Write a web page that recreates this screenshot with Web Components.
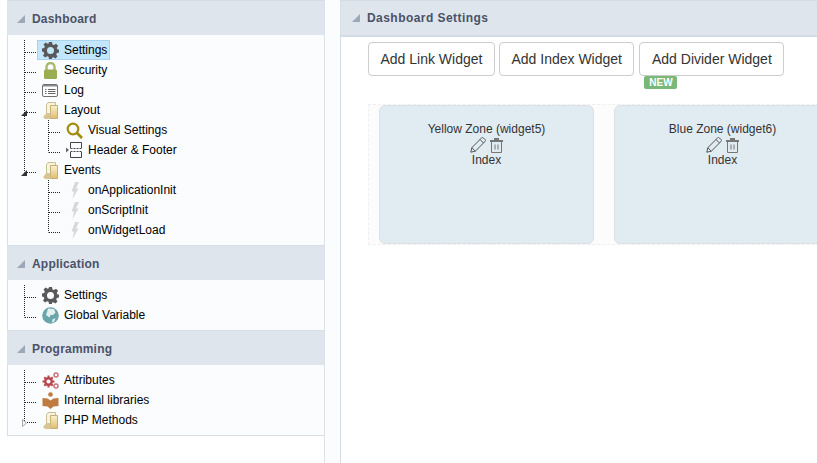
<!DOCTYPE html>
<html>
<head>
<meta charset="utf-8">
<title>Dashboard Settings</title>
<style>
html, body { margin: 0; height: 100%; }
body { font-family: "Liberation Sans", Arial, sans-serif; font-size: 12px; color: #000; background: #fff; overflow: hidden; }
</style>
</head>
<body>
<app-shell>
  <side-panel slot="side">
    <panel-section title="Dashboard">
      <tree-node icon="gear" selected>Settings</tree-node>
      <tree-node icon="lock">Security</tree-node>
      <tree-node icon="log">Log</tree-node>
      <tree-node icon="folder" toggle="open">Layout</tree-node>
      <tree-node icon="search" level="1">Visual Settings</tree-node>
      <tree-node icon="layout" level="1" last>Header &amp; Footer</tree-node>
      <tree-node icon="folder" toggle="open" last>Events</tree-node>
      <tree-node icon="bolt" level="1" parent-last>onApplicationInit</tree-node>
      <tree-node icon="bolt" level="1" parent-last>onScriptInit</tree-node>
      <tree-node icon="bolt" level="1" parent-last last>onWidgetLoad</tree-node>
    </panel-section>
    <panel-section title="Application">
      <tree-node icon="gear">Settings</tree-node>
      <tree-node icon="globe" last>Global Variable</tree-node>
    </panel-section>
    <panel-section title="Programming">
      <tree-node icon="gears">Attributes</tree-node>
      <tree-node icon="book">Internal libraries</tree-node>
      <tree-node icon="folder" toggle="closed" last>PHP Methods</tree-node>
    </panel-section>
  </side-panel>
  <main-panel slot="main" title="Dashboard Settings">
    <tool-button>Add Link Widget</tool-button>
    <tool-button>Add Index Widget</tool-button>
    <tool-button badge="NEW">Add Divider Widget</tool-button>
    <zone-card slot="zones" name="Yellow Zone (widget5)"></zone-card>
    <zone-card slot="zones" name="Blue Zone (widget6)"></zone-card>
  </main-panel>
</app-shell>

<script>
const ICONS = {
  gear: `<svg width="17" height="17" viewBox="0 0 17 17"><path fill="#595959" fill-rule="evenodd" d="M7 0h3l.5 2.400 1.500.6 2-1.300 2.100 2.100L14.800 5.900l.6 1.500 1.600.1v3l-2.200.4-.6 1.500 1.300 2-2.100 2.100-2-1.300-1.500.6L9.900 17H7l-.4-2.200-1.500-.6-2 1.300L1 13.400l1.300-2-.6-1.500L0 9.500v-3l2.200-.4.6-1.500-1.300-2L3.600.5l2 1.300 1-.4zM8.500 5a3.500 3.500 0 1 0 0 7 3.500 3.500 0 0 0 0-7z"/></svg>`,
  lock: `<svg width="17" height="17" viewBox="0 0 17 17"><path fill="none" stroke="#a9b96a" stroke-width="2.400" d="M4.500 8.500V5a4 4 0 0 1 8 0v3.500"/><rect x="2" y="7.500" width="13" height="9.500" rx="1.500" fill="#9aad50"/></svg>`,
  log: `<svg width="17" height="17" viewBox="0 0 17 17"><rect x=".5" y="2.500" width="15" height="12" rx="1.500" fill="#fff" stroke="#707070"/><path fill="#8a8a8a" d="M1 3h14v1.500H1z"/><path stroke="#666" d="M3 7.500h1.500M6 7.500h7.500M3 9.500h1.500M6 9.500h7.500M3 11.500h1.500M6 11.500h7.500"/></svg>`,
  folder: `<svg width="17" height="18" viewBox="0 0 17 18"><defs><linearGradient id="fg" x1="0" y1="0" x2="0" y2="1"><stop offset="0" stop-color="#fbf1cf"/><stop offset="1" stop-color="#e0bc6e"/></linearGradient></defs><path fill="#faf3dc" stroke="#cbbd94" d="M4.500 13V3.500l1.500-2h7.500v3"/><path fill="url(#fg)" stroke="#c5ae78" d="M8.500 4.500h7v13h-7z"/><path fill="#d8c592" d="M1 16l3.500-4H8.500v6H3z"/></svg>`,
  search: `<svg width="17" height="17" viewBox="0 0 17 17"><circle cx="7" cy="7" r="5.300" fill="none" stroke="#a08b0c" stroke-width="2.200"/><path stroke="#a08b0c" stroke-width="2.600" d="M11 11l5 5"/></svg>`,
  layout: `<svg width="17" height="17" viewBox="0 0 17 17"><path fill="#666" d="M0 5.500l3 2.500L0 10.500z"/><path fill="none" stroke="#444" d="M4.500 6V.5h11V6M4.500 10v5.500h11V10"/><path fill="none" stroke="#444" stroke-dasharray="2 1" d="M4.500 6.500h11M4.500 9.500h11"/></svg>`,
  bolt: `<svg width="17" height="17" viewBox="0 0 17 17"><path fill="#d8d8d8" d="M9 0h4L10 6.500h2.500L6.500 17 8 9.500H5.500z"/></svg>`,
  globe: `<svg width="17" height="17" viewBox="0 0 17 17"><circle cx="8.500" cy="8.500" r="8.300" fill="#6aa5a9"/><path fill="#e4efef" d="M6 1.500l6 .5 1.500 3.500-2.500 2.500-2.500 0-1 2.500L4 8l1-3zM10.500 12.500l3-1.500-1.500 4-2 .5z"/></svg>`,
  gears: `<svg width="17" height="17" viewBox="0 0 17 17"><g fill="none" stroke="#b8444c"><circle cx="6.500" cy="9.500" r="3.300" stroke-width="2.400"/><path stroke-width="2" d="M6.500 3.500v2M6.500 13.500v2M.5 9.500h2M10.500 9.500h2M2.300 5.300l1.400 1.400M9.300 12.300l1.400 1.400M10.700 5.300L9.300 6.700M3.700 12.300l-1.400 1.400"/></g><g fill="none" stroke="#c8737a" stroke-width="1.500"><circle cx="14" cy="3" r="2"/><circle cx="14" cy="14" r="2"/></g></svg>`,
  book: `<svg width="17" height="17" viewBox="0 0 17 17"><circle cx="8.500" cy="2.500" r="2.300" fill="#bf7a42"/><path fill="#bf7a42" d="M.5 6l5 .5 3 2 3-2 5-.5v8l-5 .5-3 2.500-3-2.500-5-.5z"/></svg>`
};

customElements.define('app-shell', class extends HTMLElement {
  constructor() {
    super();
    this.attachShadow({ mode: 'open' }).innerHTML = `<style>
      :host { display: grid; grid-template-columns: 325px 15px 1fr; height: 100vh; }
      .gutter { background: #fbfcfe; }
    </style>
    <slot name="side"></slot><div class="gutter"></div><slot name="main"></slot>`;
  }
});

customElements.define('side-panel', class extends HTMLElement {
  constructor() {
    super();
    this.attachShadow({ mode: 'open' }).innerHTML = `<style>
      :host { display: block; padding-left: 7px; border-right: 1px solid #dce3ea; box-sizing: border-box; height: 463px; }
    </style><slot></slot>`;
  }
});

customElements.define('panel-section', class extends HTMLElement {
  constructor() {
    super();
    this.attachShadow({ mode: 'open' }).innerHTML = `<style>
      :host { display: block; }
      :host(:first-child) { border-top: 1px solid #d3dce4; }
      .head { display: flex; align-items: center; gap: 7px; height: 33px; padding-left: 10px; padding-top: 1px;
              background: #dfe5ed; color: #4a5267; font-weight: bold; font-size: 12px; letter-spacing: .2px; }
      .tri { width: 0; height: 0; border-style: solid; border-width: 0 0 8px 8px; border-color: transparent transparent #9ba8b8 transparent; }
      .body { background: #fafcfe; padding: 5px 0; border: 1px solid #d6dee6; border-width: 0 0 1px 1px; }
    </style>
    <div class="head"><span class="tri"></span><span>${this.getAttribute('title')}</span></div>
    <div class="body"><slot></slot></div>`;
  }
});

customElements.define('tree-node', class extends HTMLElement {
  constructor() {
    super();
    const level = +(this.getAttribute('level') || 0);
    const last = this.hasAttribute('last');
    const toggle = this.getAttribute('toggle');
    const dots = 'stroke="#222" stroke-dasharray="1 1" fill="none"';
    // connectors are drawn for the row only, the next row carries on from y=20
    let lines = '';
    if (level === 0) {
      lines += `<path ${dots} d="M3.500 0V${last ? 12.500 : 20}M4 12.500H16"/>`;
    } else {
      if (!this.hasAttribute('parent-last')) lines += `<path ${dots} d="M3.500 0V20"/>`;
      lines += `<path ${dots} d="M27.500 0V${last ? 12.500 : 20}M28 12.500H40"/>`;
    }
    if (toggle === 'open') lines += `<path fill="#333" d="M0 16L6 10v6z"/>`;
    if (toggle === 'closed') lines += `<path fill="#f4f4f4" stroke="#aaa" d="M1.500 9.500v7l4-3.500z"/>`;
    const w = level === 0 ? 16 : 40;
    this.attachShadow({ mode: 'open' }).innerHTML = `<style>
      :host { display: flex; height: 20px; padding-left: 13px; color: #000; font-size: 12px; line-height: 20px; white-space: nowrap; }
      svg.branch { flex: none; display: block; }
      .item { display: flex; align-items: center; gap: 5px; padding: 0 2px 0 4px; height: 18px; border: 1px solid transparent; }
      .item.on { background: #c2e6fb; border-color: #a9d3ec; }
      .ico { width: 17px; height: 18px; display: flex; align-items: center; flex: none; }
      .ico svg { display: block; }
    </style>
    <svg class="branch" width="${w}" height="20">${lines}</svg>
    <div class="item ${this.hasAttribute('selected') ? 'on' : ''}"><span class="ico">${ICONS[this.getAttribute('icon')]}</span><slot></slot></div>`;
  }
});

customElements.define('main-panel', class extends HTMLElement {
  constructor() {
    super();
    this.attachShadow({ mode: 'open' }).innerHTML = `<style>
      :host { display: block; border-left: 1px solid #d6dfe8; height: 463px; overflow: hidden; background: #fff; }
      .head { display: flex; align-items: center; gap: 7px; height: 34px; padding-left: 11px; background: #dfe5ed; border-top: 1px solid #d3dce4; border-bottom: 2px solid #d3dce4;
              color: #4a5267; font-weight: bold; font-size: 12px; letter-spacing: .45px; }
      .tri { width: 0; height: 0; border-style: solid; border-width: 0 0 8px 8px; border-color: transparent transparent #9ba8b8 transparent; }
      .tools { display: flex; gap: 4px; padding: 5px 0 0 27px; }
      .zones { display: flex; gap: 20px; margin: 28px 0 0 27px; padding-left: 10px; height: 139px; width: 600px;
               background: #fcfcfc; border: 1px dashed #efefef; border-right: 0; }
    </style>
    <div class="head"><span class="tri"></span><span>${this.getAttribute('title')}</span></div>
    <div class="tools"><slot></slot></div>
    <div class="zones"><slot name="zones"></slot></div>`;
  }
});

customElements.define('tool-button', class extends HTMLElement {
  constructor() {
    super();
    const badge = this.getAttribute('badge');
    this.attachShadow({ mode: 'open' }).innerHTML = `<style>
      :host { display: block; position: relative; font-size: 14px; line-height: 20px; color: #333; }
      :host([badge]) { margin-left: 1px; }
      .btn { padding: 6px 11.5px; border: 1px solid #ccc; border-radius: 4px; background: #fff; white-space: nowrap; }
      .badge { position: absolute; left: 5px; top: 34px; width: 33px; height: 13px; box-sizing: border-box; background: #78b878; color: #fff;
               font-size: 10px; font-weight: bold; line-height: 13px; text-align: center; border-radius: 2px; }
    </style>
    <div class="btn"><slot></slot></div>${badge ? `<span class="badge">${badge}</span>` : ''}`;
  }
});

customElements.define('zone-card', class extends HTMLElement {
  constructor() {
    super();
    this.attachShadow({ mode: 'open' }).innerHTML = `<style>
      :host { display: block; flex: none; width: 215px; box-sizing: border-box; background: #e1ebf2; border: 1px solid #dde1e5; border-radius: 6px;
              text-align: center; color: #333; font-size: 12px; line-height: 14px; padding-top: 16px; }
      :host(:last-child) { width: 217px; }
      .acts { display: flex; justify-content: center; align-items: flex-end; gap: 4px; height: 17px; }
      svg { display: block; }
    </style>
    <div>${this.getAttribute('name')}</div>
    <div class="acts">
      <svg width="16" height="16" viewBox="0 0 16 16"><path fill="none" stroke="#555" d="M.8 15.200l1-4.500L11.500 1a1.400 1.400 0 0 1 2 0l1.500 1.500a1.400 1.400 0 0 1 0 2L5.300 14.200zM1.800 10.700l3.500 3.500M10 2.500L13.500 6"/></svg>
      <svg width="13" height="15" viewBox="0 0 13 15"><path fill="#777" d="M0 2h13v2H0zM4 0h5v2H4z"/><path fill="none" stroke="#777" d="M1.500 4v10.500h10V4M5 6.500v5M8 6.500v5"/></svg>
    </div>
    <div>Index</div>`;
  }
});
</script>
</body>
</html>
